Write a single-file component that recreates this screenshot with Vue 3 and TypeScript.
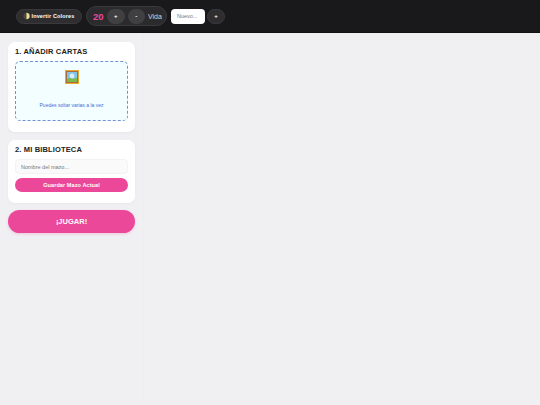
<script setup lang="ts">
const title1 = '1. AÑADIR CARTAS'
const title2 = '2. MI BIBLIOTECA'
</script>

<template>
  <div class="app">
    <header class="topbar">
      <button class="pill invert">
        <svg class="moon" viewBox="0 0 8 8" width="7" height="8">
          <circle cx="4" cy="4" r="3.6" fill="#4a473c" />
          <path d="M4 .4a3.6 3.6 0 0 1 0 7.2z" fill="#f0dc96" />
        </svg>
        <span>Invertir Colores</span>
      </button>
      <div class="life">
        <span class="count">20</span>
        <button class="round">+</button>
        <button class="round">-</button>
        <span class="vida">Vida</span>
      </div>
      <input class="new" placeholder="Nuevo..." />
      <button class="round add">+</button>
    </header>
    <div class="body">
      <aside class="side">
        <section class="card first">
          <h2>{{ title1 }}</h2>
          <div class="drop">
            <svg class="pic" viewBox="0 0 14 14" width="14" height="14">
              <rect width="14" height="14" fill="#e8a92e" />
              <rect x="1" y="1" width="12" height="12" fill="#a86b3c" />
              <rect x="2" y="2" width="10" height="10" fill="#7fc4e8" />
              <circle cx="7" cy="6" r="2.4" fill="#d8eef5" />
              <path d="M2 12V9l3-1 3 1 4-1v4z" fill="#7dba4a" />
            </svg>
            <p>Puedes soltar varias a la vez</p>
          </div>
        </section>
        <section class="card second">
          <h2>{{ title2 }}</h2>
          <input class="deck" placeholder="Nombre del mazo..." />
          <button class="save">Guardar Mazo Actual</button>
        </section>
        <button class="play">¡JUGAR!</button>
      </aside>
      <main class="board"></main>
    </div>
  </div>
</template>

<style>
html, body { margin: 0; padding: 0; background: #f0f0f3; }
</style>

<style scoped>
.app {
  width: 540px;
  height: 405px;
  display: flex;
  flex-direction: column;
  overflow: hidden;
  font-family: "Liberation Sans", Arial, sans-serif;
  background: #f0f0f3;
}
button { font-family: inherit; border: none; padding: 0; cursor: pointer; }
.topbar {
  height: 33px;
  flex: none;
  box-sizing: border-box;
  background: #19191b;
  border-bottom: 1px solid #111;
  display: flex;
  align-items: center;
  padding: 0 16px;
  gap: 4px;
}
.pill {
  height: 15px;
  box-sizing: border-box;
  width: 66px;
  border-radius: 8px;
  background: #2e2e31;
  border: 1px solid #3a3a3d;
  color: #fff;
  font-size: 5.5px;
  font-weight: 700;
  letter-spacing: 0.15px;
  display: flex;
  align-items: center;
  justify-content: center;
  gap: 1px;
  white-space: nowrap;
}
.life {
  height: 20px;
  box-sizing: border-box;
  width: 81px;
  border-radius: 10px;
  background: #2b2b2e;
  border: 1px solid #39393c;
  display: flex;
  align-items: center;
  padding: 0 0 0 6px;
  gap: 3px;
  color: #d8d8d8;
  font-size: 7px;
}
.count { color: #ec4899; font-size: 9.5px; font-weight: 700; width: 11px; }
.vida { opacity: 0.99; }
.round {
  width: 17.5px;
  height: 15px;
  border-radius: 8px;
  background: #404043;
  color: #fff;
  font-size: 6px;
  font-weight: 700;
  flex: none;
  display: flex;
  align-items: center;
  justify-content: center;
}
.new {
  width: 34px;
  height: 15px;
  box-sizing: border-box;
  border: none;
  outline: none;
  border-radius: 4px;
  background: #fff;
  padding: 0 6px;
  font-size: 5.5px;
  font-family: inherit;
}
.new::placeholder { color: #777; opacity: 1; }
.add {
  width: 18px;
  margin-left: -2px;
  background: #2e2e31;
  border: 1px solid #3a3a3d;
  box-sizing: border-box;
}
.body { flex: 1; display: flex; min-height: 0; }
.side {
  width: 144px;
  flex: none;
  box-sizing: border-box;
  border-right: 1px solid #eeeef1;
  padding: 9px 8px 0;
  display: flex;
  flex-direction: column;
  gap: 8px;
}
.board { flex: 1; }
.card {
  background: #fff;
  border-radius: 7px;
  padding: 5px 7px 0;
  box-sizing: border-box;
  box-shadow: 0 1px 3px rgba(0, 0, 0, 0.04);
}
.first { height: 90px; }
.second { height: 63px; }
h2 {
  margin: 0 0 5px;
  font-size: 7.5px;
  line-height: 9px;
  font-weight: 700;
  color: #222;
  letter-spacing: 0.15px;
}
.drop {
  height: 60px;
  box-sizing: border-box;
  border: 1.5px dashed #6f93d6;
  border-radius: 5px;
  background: #f2feff;
  display: flex;
  flex-direction: column;
  align-items: center;
  padding-top: 8px;
}
.pic { display: block; }
.drop p {
  margin: 18px 0 0;
  font-size: 5px;
  line-height: 7px;
  color: #3f6fd8;
}
.deck {
  display: block;
  width: 100%;
  height: 15px;
  box-sizing: border-box;
  border: 1px solid #f3f3f3;
  outline: none;
  border-radius: 4px;
  background: #fafafa;
  padding: 0 5px;
  font-size: 5.5px;
  font-family: inherit;
  margin-bottom: 4px;
}
.deck::placeholder { color: #777; opacity: 1; }
.save {
  display: block;
  width: 100%;
  height: 14px;
  border-radius: 7px;
  background: #ec4899;
  color: #fff;
  font-size: 5.5px;
  font-weight: 700;
  letter-spacing: 0.1px;
}
.play {
  height: 23px;
  width: 100%;
  margin-top: -1px;
  border-radius: 12px;
  background: #ec4899;
  color: #fff;
  font-size: 7.5px;
  font-weight: 700;
  box-shadow: 0 1px 3px rgba(236, 72, 153, 0.25);
}
</style>
